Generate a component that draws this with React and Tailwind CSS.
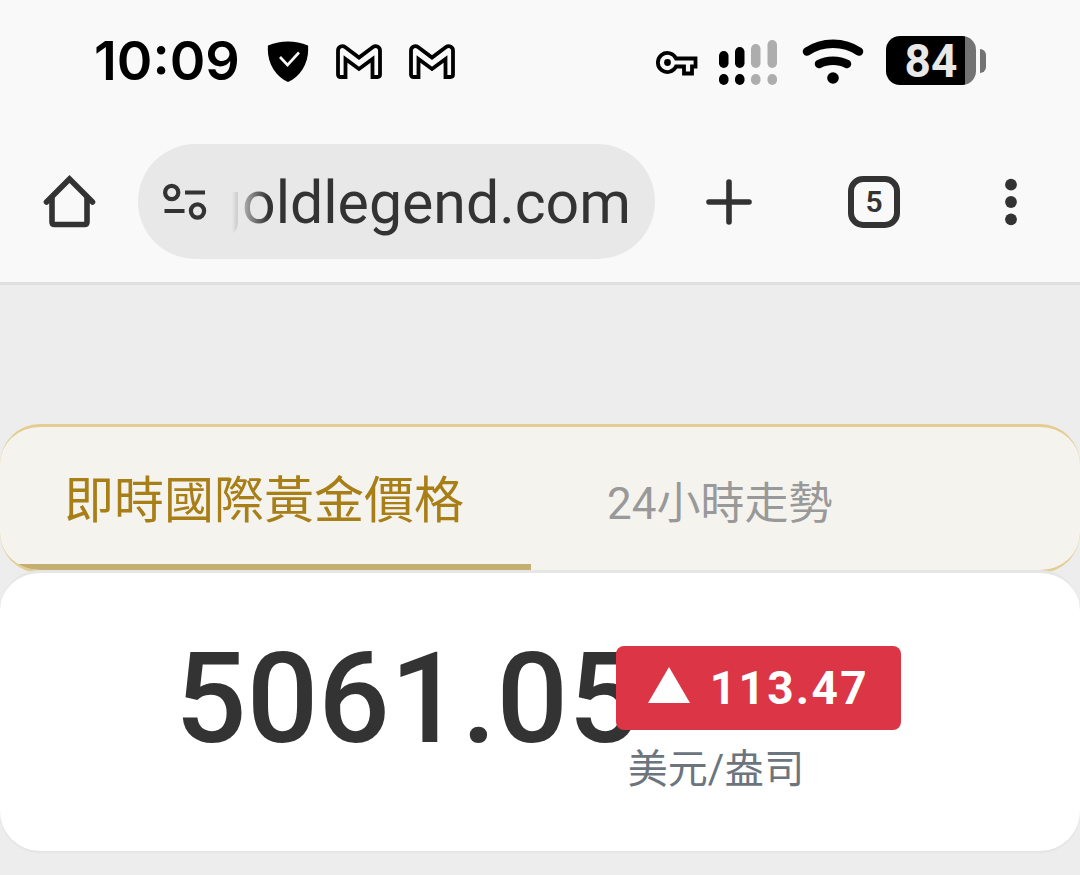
const TABS = ['即時國際黃金價格', '24小時走勢'];

const SIGNAL = [
  { x: 0, top: 11, on: true },
  { x: 16, top: 7, on: true },
  { x: 32, top: 4, on: false },
  { x: 48.5, top: 0, on: false },
];

function ShieldIcon() {
  return (
    <svg width="42" height="42" viewBox="0 -1 42 42" fill="none">
      <path d="M1 4.500C14-.8 28-.8 41 4.500 42.500 21 34 35.500 21 41 8 35.500-.5 21 1 4.500Z" fill="#000" />
      <path d="M13 16l7.500 8L32 11.500" stroke="#f9f9f9" strokeWidth="2.600" />
    </svg>
  );
}

function MailIcon() {
  return (
    <svg width="46" height="36" viewBox="0 -1 46 36" fill="none" stroke="#000" strokeWidth="3.800">
      <path d="M4.500 33Q2 33 2 30.500V6.500C2 3 6 .8 9 3L23 13.500 37 3C40 .8 44 3 44 6.500V30.500Q44 33 41.500 33H36.500V15L23 25 9.500 15V33Z" />
    </svg>
  );
}

function KeyIcon() {
  return (
    <svg width="42" height="30" viewBox="0 -5 42 30" fill="none">
      <path d="M20 7.500H39.500V15.500H36V22.500H28V15.500H20A9.500 9.500 0 1 1 20 7.500Z" stroke="#000" strokeWidth="3.800" />
      <circle cx="11.500" cy="11.500" r="3.400" fill="#000" />
    </svg>
  );
}

function SignalIcon() {
  return (
    <svg width="58" height="48" viewBox="0 -3 58 48">
      {SIGNAL.map((bar) => (
        <g key={bar.x} fill={bar.on ? '#000' : '#adadad'}>
          <rect x={bar.x} y={bar.top} width="9.500" height={28 - bar.top} rx="4.750" />
          <rect x={bar.x} y="34" width="9.500" height="11" rx="4.750" />
        </g>
      ))}
    </svg>
  );
}

function WifiIcon() {
  return (
    <svg width="62" height="46" viewBox="0 -1 62 46" fill="none" stroke="#000" strokeLinecap="round">
      <path d="M5 12.500C20 2 42 2 57 12.500" strokeWidth="8.500" />
      <path d="M17 25C25 20.500 37 20.500 45 25" strokeWidth="8.500" />
      <circle cx="31" cy="39" r="5.800" fill="#000" stroke="none" />
    </svg>
  );
}

function HomeIcon() {
  return (
    <svg width="53" height="54" viewBox="0 0 53 54" fill="none" stroke="#333" strokeWidth="5.600" strokeLinecap="round">
      <path d="M3.500 27L26.500 4 49.500 27" />
      <path d="M9 23V47Q9 49.500 11.500 49.500H41.500Q44 49.500 44 47V23" />
    </svg>
  );
}

function SiteInfoIcon() {
  return (
    <svg width="46" height="40" viewBox="0 0 46 40" fill="none" stroke="#333" strokeWidth="4.200" className="shrink-0">
      <circle cx="9.700" cy="10.500" r="6.600" />
      <path d="M23 10.500H43M2.500 29H22.500" />
      <circle cx="35.500" cy="29" r="6.600" />
    </svg>
  );
}

function StatusBar() {
  return (
    <div className="h-[121px] px-[94px] flex items-center justify-between text-black">
      <div className="flex items-center gap-[27px]">
        <span className="font-['Inter',sans-serif] font-semibold text-[54px] leading-none">10:09</span>
        <ShieldIcon />
        <MailIcon />
        <MailIcon />
      </div>
      <div className="flex items-center">
        <KeyIcon />
        <div className="ml-[21px]"><SignalIcon /></div>
        <div className="ml-[25px]"><WifiIcon /></div>
        <div className="ml-[22px] flex items-center gap-1">
          <div className="w-[90px] h-[49px] rounded-[14px] bg-[linear-gradient(to_right,#000_79px,#737373_79px)] flex items-center justify-center font-['Roboto',sans-serif] font-bold text-[46px] leading-none text-[#e8e8e8]">
            84
          </div>
          <div className="w-1.5 h-6 rounded-r-md bg-[#737373]" />
        </div>
      </div>
    </div>
  );
}

function Toolbar() {
  return (
    <div className="h-[164px] border-b-3 border-[#e0e0e0] pl-[43px] pr-[63px] flex items-center">
      <button aria-label="Home"><HomeIcon /></button>
      <div className="ml-[42px] flex-1 min-w-0 h-[115px] rounded-full bg-[#e8e8e8] px-6 flex items-center gap-6">
        <SiteInfoIcon />
        <input
          type="text"
          dir="rtl"
          aria-label="Address"
          defaultValue="goldlegend.com"
          className="flex-1 min-w-0 h-20 pt-1 bg-transparent outline-none font-['Roboto',sans-serif] text-[59px] text-[#333] [mask-image:linear-gradient(to_right,transparent,black_36px)]"
        />
      </div>
      <button aria-label="New tab" className="ml-[51px]">
        <svg width="46" height="46" viewBox="0 0 46 46" stroke="#333" strokeWidth="5.600" strokeLinecap="round">
          <path d="M23 3V43M3 23H43" />
        </svg>
      </button>
      <button className="ml-24 size-[52px] rounded-[15px] border-6 border-[#333] flex items-center justify-center font-['Roboto',sans-serif] font-semibold text-[30px] leading-none text-[#333]">
        5
      </button>
      <button aria-label="Menu" className="ml-[105px]">
        <svg width="12" height="48" viewBox="0 0 12 48" fill="#333">
          <circle cx="6" cy="6.700" r="5.900" />
          <circle cx="6" cy="24" r="5.900" />
          <circle cx="6" cy="41.300" r="5.900" />
        </svg>
      </button>
    </div>
  );
}

export default function App() {
  return (
    <div className="min-h-screen bg-[#ededed] font-['Roboto','Noto_Sans_CJK_TC',sans-serif]">
      <header className="bg-[#f9f9f9]">
        <StatusBar />
        <Toolbar />
      </header>

      <main className="pt-[139px]">
        {/* Tabs */}
        <div className="h-[149px] -mb-[3px] border-y-3 border-[#e3cd90] rounded-[40px] bg-[#f5f3ee] overflow-hidden flex">
          <button className="w-[531px] border-b-6 border-[#c5af70] pl-16 pt-3 text-left text-[50px] text-[#a87e17]">
            {TABS[0]}
          </button>
          <button className="flex-1 border-b-6 border-transparent pl-[76px] pt-4 text-left text-[44px] text-[#999]">
            {TABS[1]}
          </button>
        </div>

        {/* Price */}
        <section className="relative h-[281px] rounded-[40px] bg-white border-t-3 border-[#e6e6e6] shadow-[0_2px_2px_rgba(0,0,0,0.04)] pr-1 flex justify-center items-start">
          <div className="pt-[62px] font-medium text-[126px] leading-[128px] text-[#333]">5061.05</div>
          <div className="relative -ml-6 pt-[73px]">
            <div className="h-[84px] rounded-lg bg-[#dc3545] px-8 flex items-center gap-5 text-white font-bold text-[46px] leading-none tracking-wider">
              <svg width="42" height="42" viewBox="0 0 42 42" fill="#fff"><path d="M21 0L42 36H0Z" /></svg>
              113.47
            </div>
            <div className="pl-3 mt-3 text-[40px] leading-[56px] text-[#6c757d]">美元/盎司</div>
          </div>
        </section>
      </main>
    </div>
  );
}
